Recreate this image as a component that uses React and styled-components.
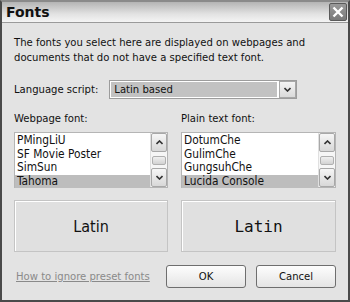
import React from "react";
import styled, { createGlobalStyle } from "styled-components";

const GlobalStyle = createGlobalStyle`
  html, body {
    margin: 0;
    padding: 0;
    background: #ffffff;
  }
  * {
    box-sizing: border-box;
  }
`;

const Window = styled.div`
  width: 350px;
  height: 302px;
  background: #e3e3e3;
  border: 2px solid #4a4a4a;
  border-top-color: #8a8a8a;
  display: flex;
  flex-direction: column;
  font-family: "DejaVu Sans Condensed", "DejaVu Sans", sans-serif;
  font-size: 11.2px;
  color: #111;
`;

const TitleBar = styled.div`
  height: 21px;
  display: flex;
  align-items: center;
  justify-content: space-between;
  padding: 0 1px 0 4px;
  background: linear-gradient(to bottom, #b4b4b4 0%, #e2e2e2 60%, #f4f4f4 100%);
  border-bottom: 1px solid #9a9a9a;
`;

const Title = styled.span`
  font-family: "DejaVu Sans", sans-serif;
  font-weight: bold;
  font-size: 14px;
  color: #111;
`;

const CloseButton = styled.div`
  width: 18px;
  height: 18px;
  border: 1px solid #5a5a5a;
  border-radius: 2px;
  background: linear-gradient(to bottom, #9a9a9a, #7a7a7a);
  display: flex;
  align-items: center;
  justify-content: center;
`;

const Body = styled.div`
  flex: 1;
  padding: 12px 12px 0 12px;
  display: flex;
  flex-direction: column;
`;

const Description = styled.p`
  margin: 0;
  line-height: 15px;
`;

const ScriptRow = styled.div`
  margin-top: 15px;
  display: flex;
  align-items: center;
  gap: 11px;
`;

const Select = styled.div`
  width: 188px;
  height: 19px;
  display: flex;
  border: 1px solid #9c9c9c;
  background: #fff;
  padding: 1px;
`;

const SelectValue = styled.div`
  flex: 1;
  background: #c2c2c2;
  padding-left: 3px;
  line-height: 15px;
`;

const ArrowButton = styled.div`
  width: 17px;
  height: 17px;
  margin: -1px -1px -1px 2px;
  border: 1px solid #a8a8a8;
  background: linear-gradient(to bottom, #f4f4f4, #dadada);
  display: flex;
  align-items: center;
  justify-content: center;
  flex-shrink: 0;
`;

const Columns = styled.div`
  margin-top: 12px;
  display: grid;
  grid-template-columns: 154px 155px;
  column-gap: 13px;
`;

const Column = styled.div`
  display: flex;
  flex-direction: column;
`;

const Label = styled.div`
  height: 15px;
  line-height: 15px;
`;

const ListBox = styled.div`
  margin-top: 6px;
  height: 56px;
  display: flex;
  border: 1px solid #b5b5b5;
  background: #fff;
`;

const Items = styled.div`
  flex: 1;
  padding-top: 1px;
`;

const Item = styled.div`
  height: 13.5px;
  line-height: 13px;
  padding-left: 2px;
  font-size: 11.8px;
  background: ${(p) => (p.$selected ? "#bdbdbd" : "transparent")};
`;

const ScrollBar = styled.div`
  width: 17px;
  display: flex;
  flex-direction: column;
  background: #f6f6f6;
  border-left: 1px solid #e0e0e0;
`;

const ScrollButton = styled.div`
  height: 19px;
  border: 1px solid #a8a8a8;
  border-radius: 2px;
  background: linear-gradient(to bottom, #f6f6f6, #d8d8d8);
  display: flex;
  align-items: center;
  justify-content: center;
`;

const Track = styled.div`
  flex: 1;
  display: flex;
  flex-direction: column;
  justify-content: center;
  padding: 0 1px;
`;

const Thumb = styled.div`
  height: 9px;
  border: 1px solid #b0b0b0;
  border-radius: 2px;
  background: linear-gradient(to bottom, #f0f0f0, #d2d2d2);
`;

const Preview = styled.div`
  margin-top: 12px;
  height: 52px;
  border: 1px solid #c4c4c4;
  box-shadow: inset 1px 1px 0 #ffffff;
  background: #e0e0e0;
  display: flex;
  align-items: center;
  justify-content: center;
  font-family: ${(p) =>
    p.$mono ? '"DejaVu Sans Mono", monospace' : '"DejaVu Sans Condensed", "DejaVu Sans", sans-serif'};
  font-size: ${(p) => (p.$mono ? 16 : 16)}px;
  color: #111;
`;

const Footer = styled.div`
  margin-top: 13px;
  display: flex;
  align-items: center;
`;

const HelpLink = styled.a`
  flex: 1;
  color: #8a8a8a;
  text-decoration: underline;
  padding-left: 2px;
`;

const Button = styled.div`
  width: 80px;
  height: 23px;
  margin-left: ${(p) => p.$gap || 0}px;
  border: 1px solid #6e6e6e;
  border-radius: 3px;
  background: linear-gradient(to bottom, #fdfdfd, #e4e4e4);
  display: flex;
  align-items: center;
  justify-content: center;
`;

const Chevron = ({ up }) => (
  <svg width="7" height="5" viewBox="0 0 7 5">
    <path
      d={up ? "M0.5 4 L3.5 1 L6.5 4" : "M0.5 1 L3.5 4 L6.5 1"}
      fill="none"
      stroke="#333"
      strokeWidth="1.6"
    />
  </svg>
);

const FontList = ({ items, selected }) => (
  <ListBox>
    <Items>
      {items.map((name) => (
        <Item key={name} $selected={name === selected}>
          {name}
        </Item>
      ))}
    </Items>
    <ScrollBar>
      <ScrollButton>
        <Chevron up />
      </ScrollButton>
      <Track>
        <Thumb />
      </Track>
      <ScrollButton>
        <Chevron />
      </ScrollButton>
    </ScrollBar>
  </ListBox>
);

export default function App() {
  return (
    <>
      <GlobalStyle />
      <Window>
        <TitleBar>
          <Title>Fonts</Title>
          <CloseButton>
            <svg width="12" height="12" viewBox="0 0 12 12">
              <path
                d="M1.5 1.5 L10.5 10.5 M10.5 1.5 L1.5 10.5"
                stroke="#fff"
                strokeWidth="2.4"
              />
            </svg>
          </CloseButton>
        </TitleBar>
        <Body>
          <Description>
            The fonts you select here are displayed on webpages and documents
            that do not have a specified text font.
          </Description>
          <ScriptRow>
            <span>Language script:</span>
            <Select>
              <SelectValue>Latin based</SelectValue>
              <ArrowButton>
                <Chevron />
              </ArrowButton>
            </Select>
          </ScriptRow>
          <Columns>
            <Column>
              <Label>Webpage font:</Label>
              <FontList
                items={["PMingLiU", "SF Movie Poster", "SimSun", "Tahoma"]}
                selected="Tahoma"
              />
              <Preview>Latin</Preview>
            </Column>
            <Column>
              <Label>Plain text font:</Label>
              <FontList
                items={["DotumChe", "GulimChe", "GungsuhChe", "Lucida Console"]}
                selected="Lucida Console"
              />
              <Preview $mono>Latin</Preview>
            </Column>
          </Columns>
          <Footer>
            <HelpLink>How to ignore preset fonts</HelpLink>
            <Button>OK</Button>
            <Button $gap={10}>Cancel</Button>
          </Footer>
        </Body>
      </Window>
    </>
  );
}
